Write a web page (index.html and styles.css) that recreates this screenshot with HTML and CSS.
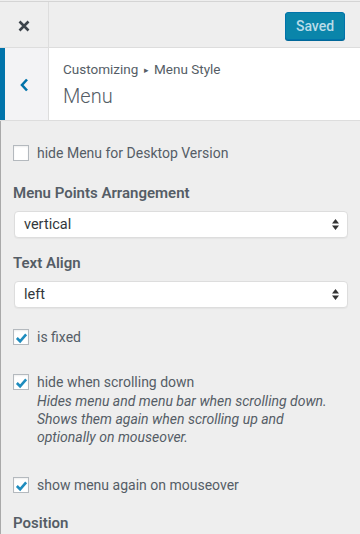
FILE: index.html
```html
<!DOCTYPE html>
<html>
<head>
<meta charset="utf-8">
<link rel="stylesheet" href="styles.css">
</head>
<body>
<div class="topbar">
  <div class="close">
    <svg width="12" height="12" viewBox="0 0 12 12"><path d="M1.5 1.5 L10.5 10.5 M10.5 1.5 L1.5 10.5" stroke="#3c434a" stroke-width="2.6" stroke-linecap="butt"/></svg>
  </div>
  <div class="actions"><span class="saved">Saved</span></div>
</div>
<div class="sechead">
  <div class="back">
    <svg width="9" height="14" viewBox="0 0 9 14"><path d="M7 1.5 L2 7 L7 12.5" fill="none" stroke="#0073aa" stroke-width="2.6"/></svg>
  </div>
  <div class="titles">
    <div class="crumb">Customizing <span class="arrow">▸</span> Menu Style</div>
    <div class="title">Menu</div>
  </div>
</div>
<div class="panel">
  <div class="check c1">
    <span class="box"></span>
    <span class="label">hide Menu for Desktop Version</span>
  </div>
  <div class="ctitle t1">Menu Points Arrangement</div>
  <div class="select"><span>vertical</span>
    <svg width="7" height="11" viewBox="0 0 7 11"><path d="M3.5 0 L7 4.5 L0 4.5 Z M0 6.5 L7 6.5 L3.5 11 Z" fill="#333"/></svg>
  </div>
  <div class="ctitle t2">Text Align</div>
  <div class="select"><span>left</span>
    <svg width="7" height="11" viewBox="0 0 7 11"><path d="M3.5 0 L7 4.5 L0 4.5 Z M0 6.5 L7 6.5 L3.5 11 Z" fill="#333"/></svg>
  </div>
  <div class="check c2">
    <span class="box"><svg width="14" height="12" viewBox="0 0 14 12"><path d="M2 6 L5.5 9.5 L12 2" fill="none" stroke="#1e8cbe" stroke-width="2.8"/></svg></span>
    <span class="label">is fixed</span>
  </div>
  <div class="check c3">
    <span class="box"><svg width="14" height="12" viewBox="0 0 14 12"><path d="M2 6 L5.5 9.5 L12 2" fill="none" stroke="#1e8cbe" stroke-width="2.8"/></svg></span>
    <span class="label">hide when scrolling down</span>
  </div>
  <div class="desc">Hides menu and menu bar when scrolling down. Shows them again when scrolling up and optionally on mouseover.</div>
  <div class="check c4">
    <span class="box"><svg width="14" height="12" viewBox="0 0 14 12"><path d="M2 6 L5.5 9.5 L12 2" fill="none" stroke="#1e8cbe" stroke-width="2.8"/></svg></span>
    <span class="label">show menu again on mouseover</span>
  </div>
  <div class="ctitle t3">Position</div>
</div>
</body>
</html>
```
FILE: styles.css
```css
* { box-sizing: border-box; }
html, body { margin: 0; padding: 0; }
body {
  background: #eeeeee;
  font-family: Roboto, "Liberation Sans", sans-serif;
  color: #555d66;
  font-size: 14px;
  width: 360px;
  height: 534px;
  overflow: hidden;
}
.topbar {
  margin-top: 1px;
  border-top: 1px solid #d4d4d4;
  border-bottom: 1px solid #dddddd;
  height: 47px;
  display: flex;
  background: #eeeeee;
}
.close {
  width: 49px;
  border-right: 1px solid #dddddd;
  display: flex;
  align-items: center;
  justify-content: center;
  padding-top: 2px;
}
.actions {
  flex: 1;
  display: flex;
  justify-content: flex-end;
  align-items: center;
  padding-right: 15px;
  padding-top: 3px;
}
.saved {
  width: 60px;
  height: 28px;
  background: #0a85aa;
  border: 1px solid #0073aa;
  border-radius: 3px;
  color: #b9dce8;
  font-size: 14px;
  font-weight: 500;
  display: flex;
  align-items: center;
  justify-content: center;
  box-shadow: 0 1px 0 #006799;
}
.sechead {
  height: 73px;
  display: flex;
  background: #ffffff;
  border-bottom: 1px solid #dddddd;
}
.back {
  width: 49px;
  background: #f3f3f5;
  border-left: 5px solid #0073aa;
  border-right: 1px solid #dddddd;
  display: flex;
  align-items: center;
  justify-content: center;
  padding-right: 4px;
  padding-top: 1px;
}
.titles {
  padding-left: 14px;
  padding-top: 13px;
}
.crumb {
  font-size: 13.5px;
  line-height: 17px;
  color: #555d66;
}
.crumb .arrow { font-size: 9px; position: relative; top: -1px; margin: 0 2px; }
.title {
  font-size: 20px;
  font-weight: 300;
  line-height: 26px;
  margin-top: 3px;
  color: #555d66;
}
.panel {
  border-left: 1px solid #a9a9a9;
  height: 414px;
  padding: 24px 12px 0 12px;
}
.check {
  display: flex;
  align-items: center;
  height: 16px;
}
.box {
  width: 16px;
  height: 16px;
  background: #ffffff;
  border: 1px solid #b4b9be;
  box-shadow: inset 0 1px 2px rgba(0,0,0,0.07);
  display: flex;
  align-items: center;
  justify-content: center;
  flex-shrink: 0;
}
.box svg { margin-left: 1px; margin-top: 1px; }
.label {
  margin-left: 8px;
  font-size: 14px;
  line-height: 16px;
}
.ctitle {
  font-size: 15px;
  font-weight: 600;
  line-height: 20px;
}
.t1 { margin-top: 22px; }
.t2 { margin-top: 15px; }
.t3 { margin-top: 20px; }
.select {
  margin-top: 8px;
  margin-left: 1px;
  height: 27px;
  background: #ffffff;
  border: 1px solid #dddddd;
  border-radius: 4px;
  box-shadow: 0 1px 1px rgba(0,0,0,0.04);
  display: flex;
  align-items: center;
  justify-content: space-between;
  padding: 0 8px 0 9px;
  font-size: 14.5px;
  color: #32373c;
}
.c2 { margin-top: 21px; }
.c3 { margin-top: 29px; }
.desc {
  margin-left: 24px;
  margin-top: 2px;
  font-size: 14px;
  font-style: italic;
  line-height: 18px;
  width: 300px;
}
.c4 { margin-top: 31px; }
```
